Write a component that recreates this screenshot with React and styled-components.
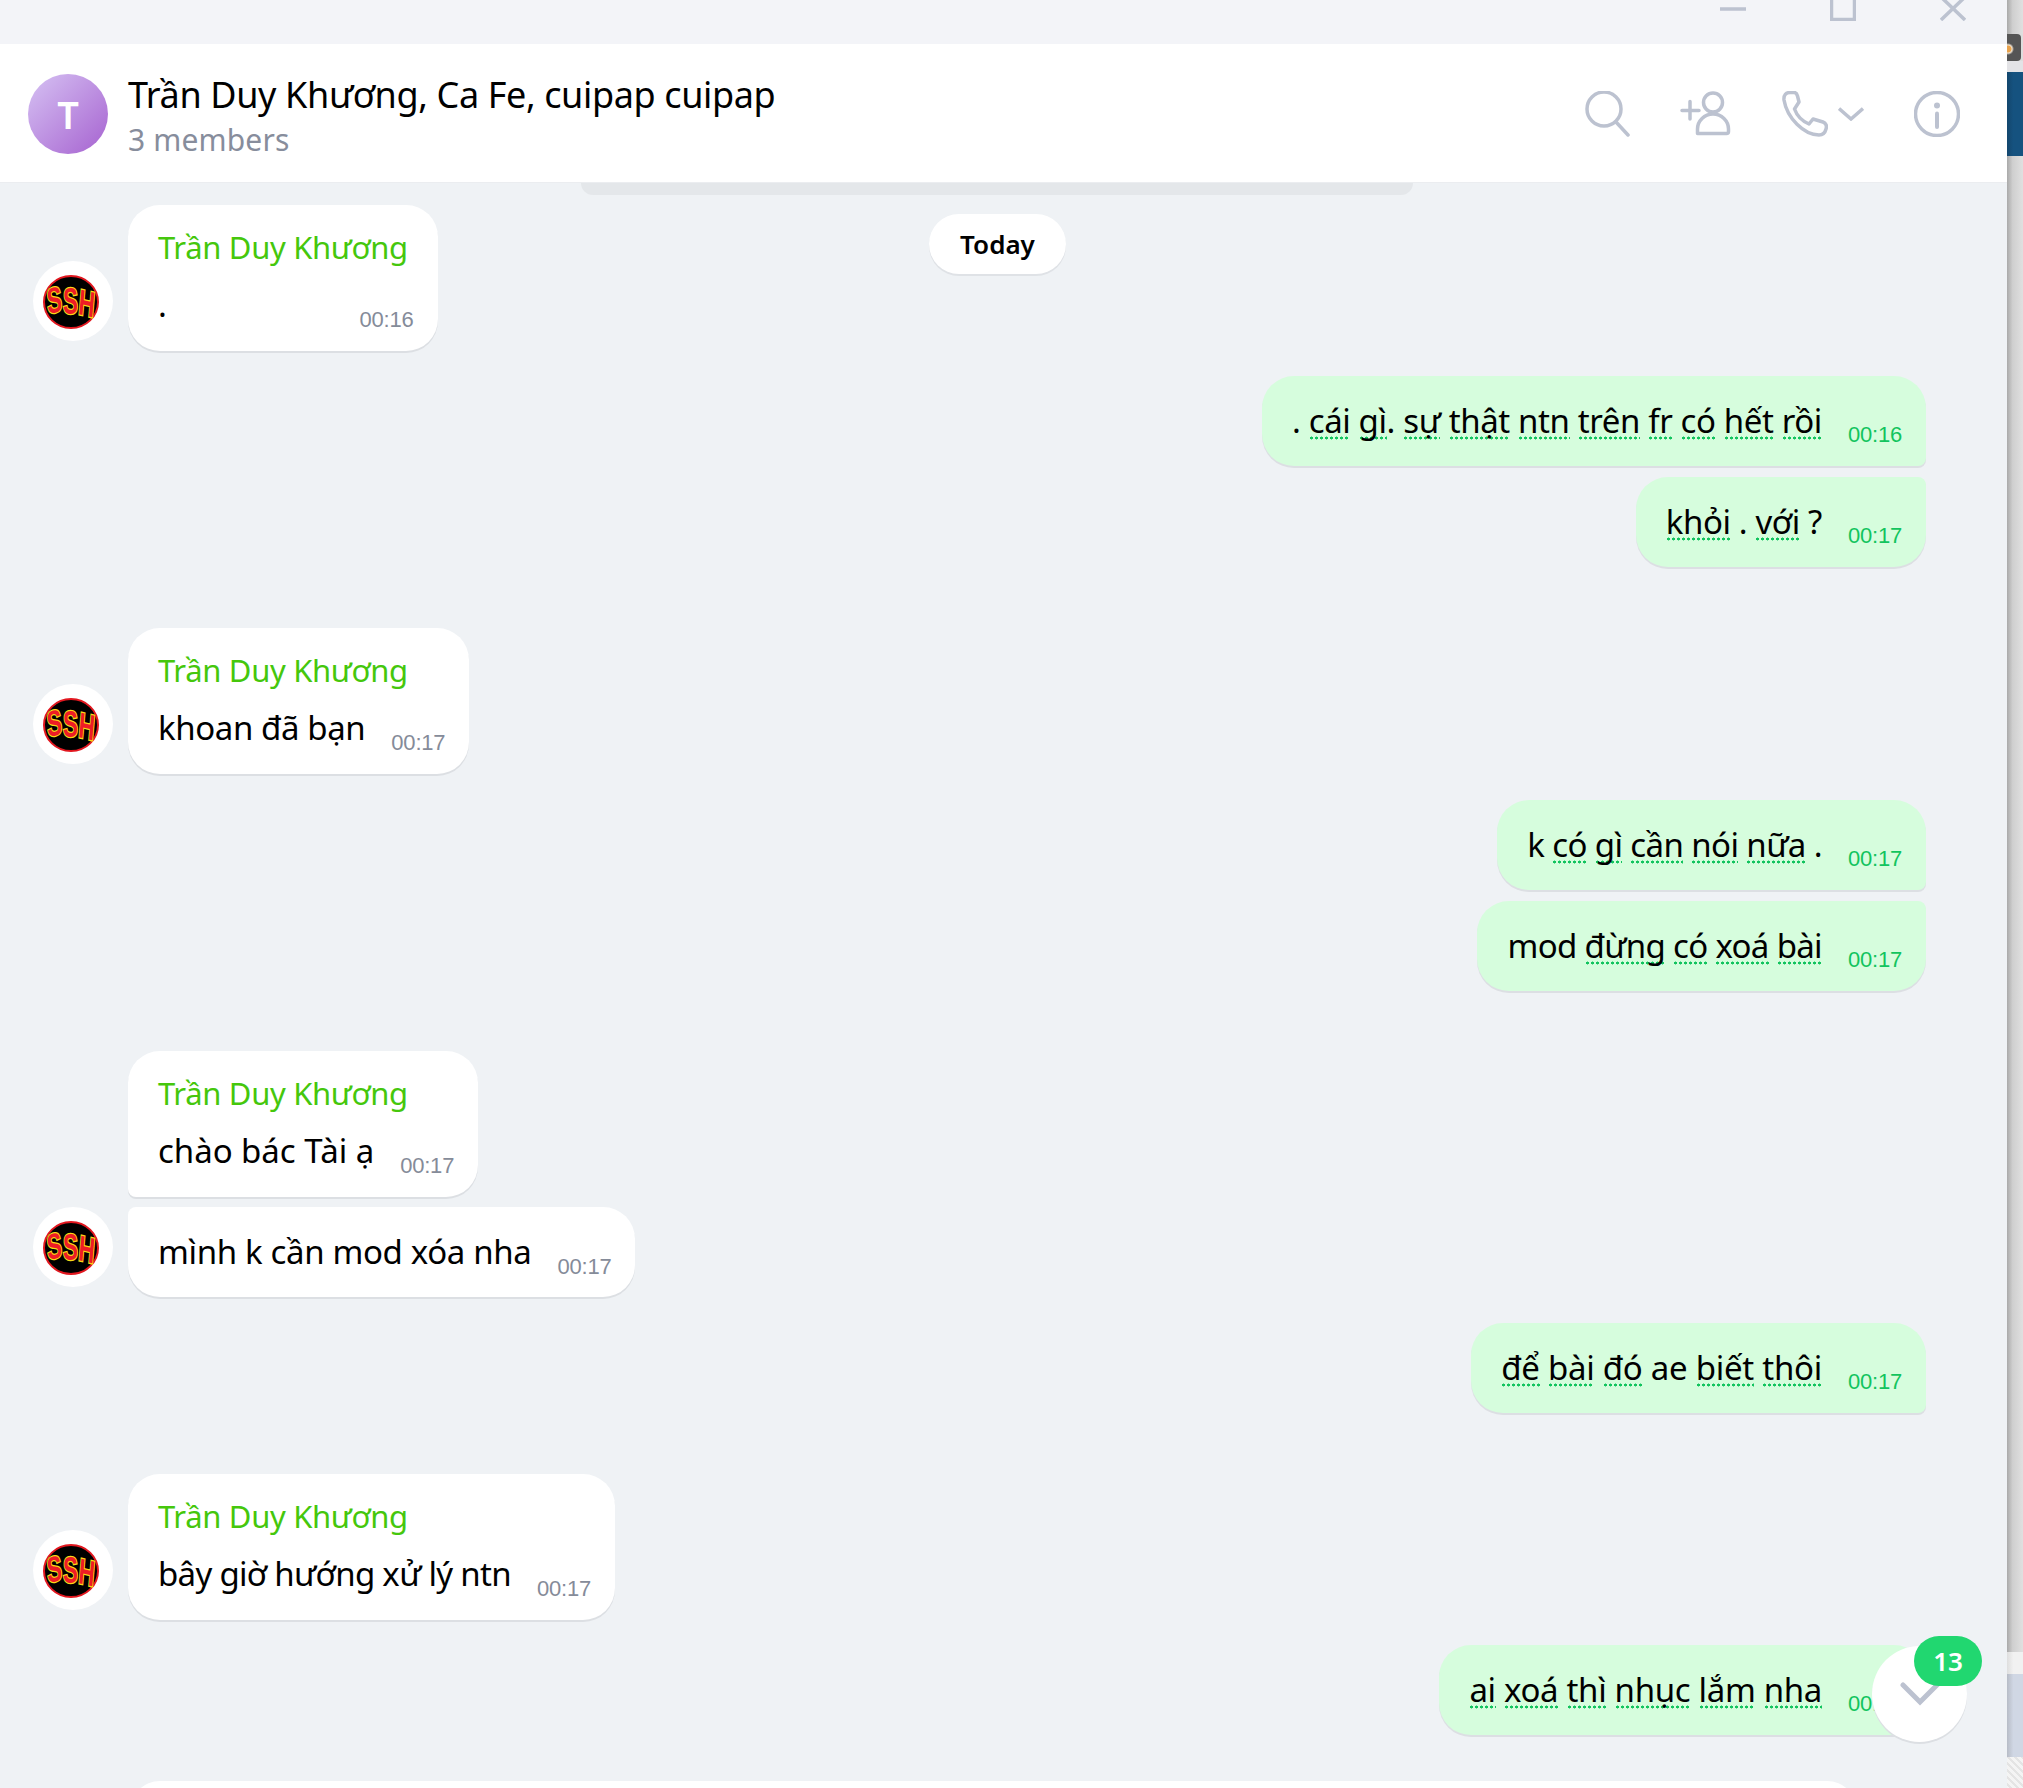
import React from "react";
import styled, { createGlobalStyle } from "styled-components";

const ICON = "#bcc2d0";
const SANS = `"Noto Sans", "Open Sans", sans-serif`;

const GlobalStyle = createGlobalStyle`
  html, body {
    margin: 0;
    padding: 0;
    background: #eff2f5;
  }
  * {
    box-sizing: border-box;
  }
`;

export default function App() {
  return (
    <>
      <GlobalStyle />
      <Page>
        <Main>
          <TitleBar>
            <svg width="26" height="21" fill="none" stroke={ICON} strokeWidth="3.5">
              <path d="M0 9H26" />
            </svg>
            <svg width="26" height="21" fill="none" stroke={ICON} strokeWidth="3.5">
              <path d="M1.5 0V19.5H24.5V0" />
            </svg>
            <svg width="26" height="21" fill="none" stroke={ICON} strokeWidth="3.5">
              <path d="M1 -3L25 20M25 -3L1 20" />
            </svg>
          </TitleBar>
          <Header>
            <GroupAvatar>T</GroupAvatar>
            <HeaderInfo>
              <Title>Trần Duy Khương, Ca Fe, cuipap cuipap</Title>
              <Members>3 members</Members>
            </HeaderInfo>
            <Tools>
              <SearchIcon />
              <AddUserIcon />
              <PhoneGroup>
                <PhoneIcon />
                <svg width="26" height="14" fill="none" stroke={ICON} strokeWidth="3.5">
                  <path d="M1 1.5L13 12L25 1.5" />
                </svg>
              </PhoneGroup>
              <InfoIcon />
            </Tools>
          </Header>
          <Chat>
            <LoadedEdge />
            <DatePill>Today</DatePill>

            <Row>
              <SshAvatar />
              <Bubble>
                <Sender>Trần Duy Khương</Sender>
                <Line>
                  <Text>.</Text>
                  <Time $wide>00:16</Time>
                </Line>
              </Bubble>
            </Row>

            <Row $mine $top={25}>
              <Bubble $mine $corner="br">
                <Line>
                  <Text>
                    . <Spell>cái</Spell> <Spell>gì</Spell>. <Spell>sự</Spell>{" "}
                    <Spell>thật</Spell> <Spell>ntn</Spell> <Spell>trên</Spell>{" "}
                    <Spell>fr</Spell> <Spell>có</Spell> <Spell>hết</Spell> <Spell>rồi</Spell>
                  </Text>
                  <Time $mine>00:16</Time>
                </Line>
              </Bubble>
            </Row>
            <Row $mine $top={11}>
              <Bubble $mine $corner="tr">
                <Line>
                  <Text>
                    <Spell>khỏi</Spell> . <Spell>với</Spell> ?
                  </Text>
                  <Time $mine>00:17</Time>
                </Line>
              </Bubble>
            </Row>

            <Row $top={61}>
              <SshAvatar />
              <Bubble>
                <Sender>Trần Duy Khương</Sender>
                <Line>
                  <Text>khoan đã bạn</Text>
                  <Time>00:17</Time>
                </Line>
              </Bubble>
            </Row>

            <Row $mine $top={26}>
              <Bubble $mine $corner="br">
                <Line>
                  <Text $track={-0.6}>
                    k <Spell>có</Spell> <Spell>gì</Spell> <Spell>cần</Spell> <Spell>nói</Spell>{" "}
                    <Spell>nữa</Spell> .
                  </Text>
                  <Time $mine>00:17</Time>
                </Line>
              </Bubble>
            </Row>
            <Row $mine $top={11}>
              <Bubble $mine $corner="tr">
                <Line>
                  <Text $track={-0.67}>
                    mod <Spell>đừng</Spell> <Spell>có</Spell> <Spell>xoá</Spell> <Spell>bài</Spell>
                  </Text>
                  <Time $mine>00:17</Time>
                </Line>
              </Bubble>
            </Row>

            <Row $top={60}>
              <AvatarSlot />
              <Bubble $corner="bl">
                <Sender>Trần Duy Khương</Sender>
                <Line>
                  <Text $track={-0.04}>chào bác Tài ạ</Text>
                  <Time>00:17</Time>
                </Line>
              </Bubble>
            </Row>
            <Row $top={10}>
              <SshAvatar />
              <Bubble $corner="tl" $solo>
                <Line>
                  <Text $track={-0.35}>mình k cần mod xóa nha</Text>
                  <Time>00:17</Time>
                </Line>
              </Bubble>
            </Row>

            <Row $mine $top={26}>
              <Bubble $mine $corner="br">
                <Line>
                  <Text $track={-0.28}>
                    <Spell>để</Spell> <Spell>bài</Spell> <Spell>đó</Spell> ae <Spell>biết</Spell>{" "}
                    <Spell>thôi</Spell>
                  </Text>
                  <Time $mine>00:17</Time>
                </Line>
              </Bubble>
            </Row>

            <Row $top={61}>
              <SshAvatar />
              <Bubble>
                <Sender>Trần Duy Khương</Sender>
                <Line>
                  <Text $track={-0.7}>bây giờ hướng xử lý ntn</Text>
                  <Time>00:17</Time>
                </Line>
              </Bubble>
            </Row>

            <Row $mine $top={25}>
              <Bubble $mine $corner="none">
                <Line>
                  <Text $track={-0.34}>
                    <Spell>ai</Spell> <Spell>xoá</Spell> <Spell>thì</Spell> <Spell>nhục</Spell>{" "}
                    <Spell>lắm</Spell> <Spell>nha</Spell>
                  </Text>
                  <Time $mine>00:17</Time>
                </Line>
              </Bubble>
            </Row>

            <NextBubble />

            <ScrollDown>
              <svg width="40" height="24" fill="none" stroke={ICON} strokeWidth="5" strokeLinecap="round">
                <path d="M3 3L20 20L37 3" />
              </svg>
              <UnreadBadge>13</UnreadBadge>
            </ScrollDown>
          </Chat>
        </Main>
        <SideStrip>
          <StripPart $h={34} />
          <ExtensionChip />
          <StripPart $h={11} $bg="#e3e3e6" />
          <StripPart $h={84} $bg="linear-gradient(90deg, #13466d, #15527f 40%)" />
          <StripPart $h={1496} />
          <StripPart $h={22} $bg="linear-gradient(90deg, #dedede, #f1f1f1 40%)" />
          <StripPart $h={83} $bg="linear-gradient(90deg, #b7bcc6, #d0d7e4 40%)" />
          <StripPart $h={33} $bg="repeating-linear-gradient(45deg, #f4f4f4 0 3px, #e4e4e4 3px 5px)" />
        </SideStrip>
      </Page>
    </>
  );
}

function SearchIcon() {
  return (
    <svg width="45" height="46" fill="none" stroke={ICON} strokeWidth="3.5" strokeLinecap="round">
      <circle cx="19" cy="18" r="17" />
      <path d="M31 31L43 44" />
    </svg>
  );
}

function AddUserIcon() {
  return (
    <svg width="52" height="46" fill="none" stroke={ICON} strokeWidth="3.5" strokeLinecap="round">
      <path d="M2 19.5H19M10 10.5V28" />
      <circle cx="33" cy="11.5" r="9.5" />
      <path d="M17.5 42.5V38A15.5 15 0 0 1 48.5 38V40.5A2 2 0 0 1 46.5 42.5Z" strokeLinejoin="round" />
    </svg>
  );
}

function PhoneIcon() {
  return (
    <svg width="46" height="46" fill="none" stroke={ICON} strokeWidth="3.5" strokeLinejoin="round">
      <path d="M2 9C1.5 4 4 1.5 8 1.5H12C14 1.5 15 3 15.5 5L17 11L12.5 18C15 25 20 30 27 33L31 28L41 31C44 32 45 35 44 38C43 42 41 44 37 44C22 44 5 27 2 9Z" />
    </svg>
  );
}

function InfoIcon() {
  return (
    <svg width="46" height="46" fill="none" stroke={ICON} strokeWidth="3.5" strokeLinecap="round">
      <circle cx="23" cy="23" r="21.5" />
      <circle cx="23" cy="14.5" r="3" fill={ICON} stroke="none" />
      <path d="M23 22.5V36" strokeWidth="4" />
    </svg>
  );
}

function SshAvatar() {
  return (
    <AvatarSlot>
      <LogoSvg width="56" height="54" viewBox="0 0 56 54">
        <ellipse cx="28" cy="27" rx="27" ry="26" fill="#000" stroke="#e2171f" strokeWidth="2" />
        <text
          transform="translate(5 39) scale(0.62 1)"
          rotate="-8 0 8"
          fill="#ee1c25"
          stroke="#f7d917"
          strokeWidth="2.6"
          paintOrder="stroke"
          fontFamily="'Liberation Sans', sans-serif"
          fontWeight="700"
          fontSize="36"
        >
          SSH
        </text>
      </LogoSvg>
    </AvatarSlot>
  );
}

const Page = styled.div`
  display: flex;
  width: 2023px;
  height: 1788px;
  overflow: hidden;
  font-family: ${SANS};
  color: #000;
`;

const Main = styled.div`
  display: flex;
  flex-direction: column;
  width: 2007px;
  height: 100%;
`;

const TitleBar = styled.div`
  display: flex;
  align-items: flex-start;
  justify-content: flex-end;
  gap: 84px;
  flex: none;
  height: 44px;
  padding-right: 41px;
  background: #f3f4f8;
`;

const Header = styled.header`
  display: flex;
  align-items: center;
  flex: none;
  height: 139px;
  padding: 2px 47px 1px 28px;
  background: #fff;
  border-bottom: 1px solid #ebedf0;
`;

const GroupAvatar = styled.div`
  display: flex;
  align-items: center;
  justify-content: center;
  flex: none;
  width: 80px;
  height: 80px;
  margin-right: 20px;
  border-radius: 50%;
  background: linear-gradient(135deg, #d6c2f3, #a662d0);
  color: #fff;
  font-size: 38px;
  font-weight: 600;
`;

const HeaderInfo = styled.div`
  display: flex;
  flex-direction: column;
  flex: 1;
  margin-top: 3px;
`;

const Title = styled.div`
  font-size: 36px;
  line-height: 48px;
  letter-spacing: -0.37px;
`;

const Members = styled.div`
  font-size: 30px;
  line-height: 41px;
  letter-spacing: 0.15px;
  color: #878d9c;
`;

const Tools = styled.div`
  display: flex;
  align-items: center;
  gap: 50px;
`;

const PhoneGroup = styled.div`
  display: flex;
  align-items: center;
  gap: 10px;
`;

const Chat = styled.main`
  position: relative;
  flex: 1;
  min-height: 0;
  overflow: hidden;
  padding-top: 22px;
  background: #eff2f5;
`;

const LoadedEdge = styled.div`
  position: absolute;
  top: 0;
  left: 581px;
  width: 832px;
  height: 12px;
  border-radius: 0 0 22px 22px;
  background: #e4e7ea;
`;

const DatePill = styled.div`
  position: absolute;
  top: 31px;
  left: 929px;
  display: flex;
  align-items: center;
  justify-content: center;
  width: 137px;
  height: 60px;
  border-radius: 30px;
  background: #fff;
  box-shadow: 0 2px 0 #dfe2e6;
  font-size: 26px;
  font-weight: 600;
`;

const Row = styled.div`
  display: flex;
  align-items: flex-end;
  justify-content: ${(p) => (p.$mine ? "flex-end" : "flex-start")};
  gap: 15px;
  margin-top: ${(p) => p.$top || 0}px;
  padding: ${(p) => (p.$mine ? "0 81px 0 0" : "0 0 0 33px")};
`;

const AvatarSlot = styled.div`
  display: flex;
  align-items: center;
  justify-content: center;
  flex: none;
  width: 80px;
  height: 80px;
  margin-bottom: 10px;
  border-radius: 50%;
  background: ${(p) => (p.children ? "#fff" : "transparent")};
`;

const LogoSvg = styled.svg`
  margin: 2px 4px 0 0;
`;

const cornerRadius = {
  br: "32px 32px 8px 32px",
  tr: "32px 8px 32px 32px",
  bl: "32px 32px 32px 8px",
  tl: "8px 32px 32px 32px",
  none: "32px",
};

const Bubble = styled.div`
  display: flex;
  flex-direction: column;
  padding: ${(p) => (p.$mine || p.$solo ? "21px 24px 21px 30px" : "21px 24px 22px 30px")};
  border-radius: ${(p) => cornerRadius[p.$corner || "none"]};
  background: ${(p) => (p.$mine ? "#d6fddd" : "#fff")};
  box-shadow: 0 2px 0 #dcdfe3;
`;

const Sender = styled.div`
  margin-bottom: 13px;
  font-size: 31px;
  line-height: 42px;
  letter-spacing: -0.33px;
  color: #45c70c;
`;

const Line = styled.div`
  display: flex;
  align-items: flex-end;
  gap: 26px;
  height: 48px;
`;

const Text = styled.div`
  font-size: 33px;
  line-height: 48px;
  letter-spacing: ${(p) => p.$track ?? -0.4}px;
  white-space: pre-wrap;
`;

const Spell = styled.span`
  background: radial-gradient(circle, #12c45e 1.3px, transparent 1.7px) 0 calc(100% - 3px) / 5px 4px repeat-x;
`;

const Time = styled.span`
  margin-left: ${(p) => (p.$wide ? "167px" : 0)};
  margin-bottom: ${(p) => (p.$mine ? "-4px" : "-5px")};
  font-family: "Liberation Sans", Arial, sans-serif;
  font-size: 22px;
  line-height: 28px;
  letter-spacing: -0.2px;
  color: ${(p) => (p.$mine ? "#12c45e" : "#858b99")};
`;

const NextBubble = styled.div`
  height: 60px;
  margin: 46px 150px 0 130px;
  border-radius: 32px;
  background: #fff;
`;

const ScrollDown = styled.div`
  position: absolute;
  right: 40px;
  bottom: 46px;
  display: flex;
  align-items: center;
  justify-content: center;
  width: 95px;
  height: 96px;
  border-radius: 50%;
  background: #fff;
  box-shadow: 0 2px 0 #dcdfe3;
`;

const UnreadBadge = styled.span`
  position: absolute;
  top: -10px;
  right: -15px;
  display: flex;
  align-items: center;
  justify-content: center;
  width: 68px;
  height: 50px;
  border-radius: 25px;
  background: #21d770;
  color: #fff;
  font-size: 26px;
  font-weight: 600;
`;

const SideStrip = styled.aside`
  display: flex;
  flex-direction: column;
  width: 16px;
  height: 100%;
  background: #ddd;
`;

const StripPart = styled.div`
  flex: none;
  height: ${(p) => p.$h}px;
  background: ${(p) => p.$bg || "linear-gradient(90deg, #a9a9a9, #cfcfcf 35%, #e0e0e0)"};
`;

const ExtensionChip = styled.div`
  flex: none;
  width: 14px;
  height: 27px;
  border-radius: 0 4px 4px 0;
  background: radial-gradient(circle at 1px 15px, #e8a24c 0 3px, #f3e6d4 4px, #555 6px);
`;
